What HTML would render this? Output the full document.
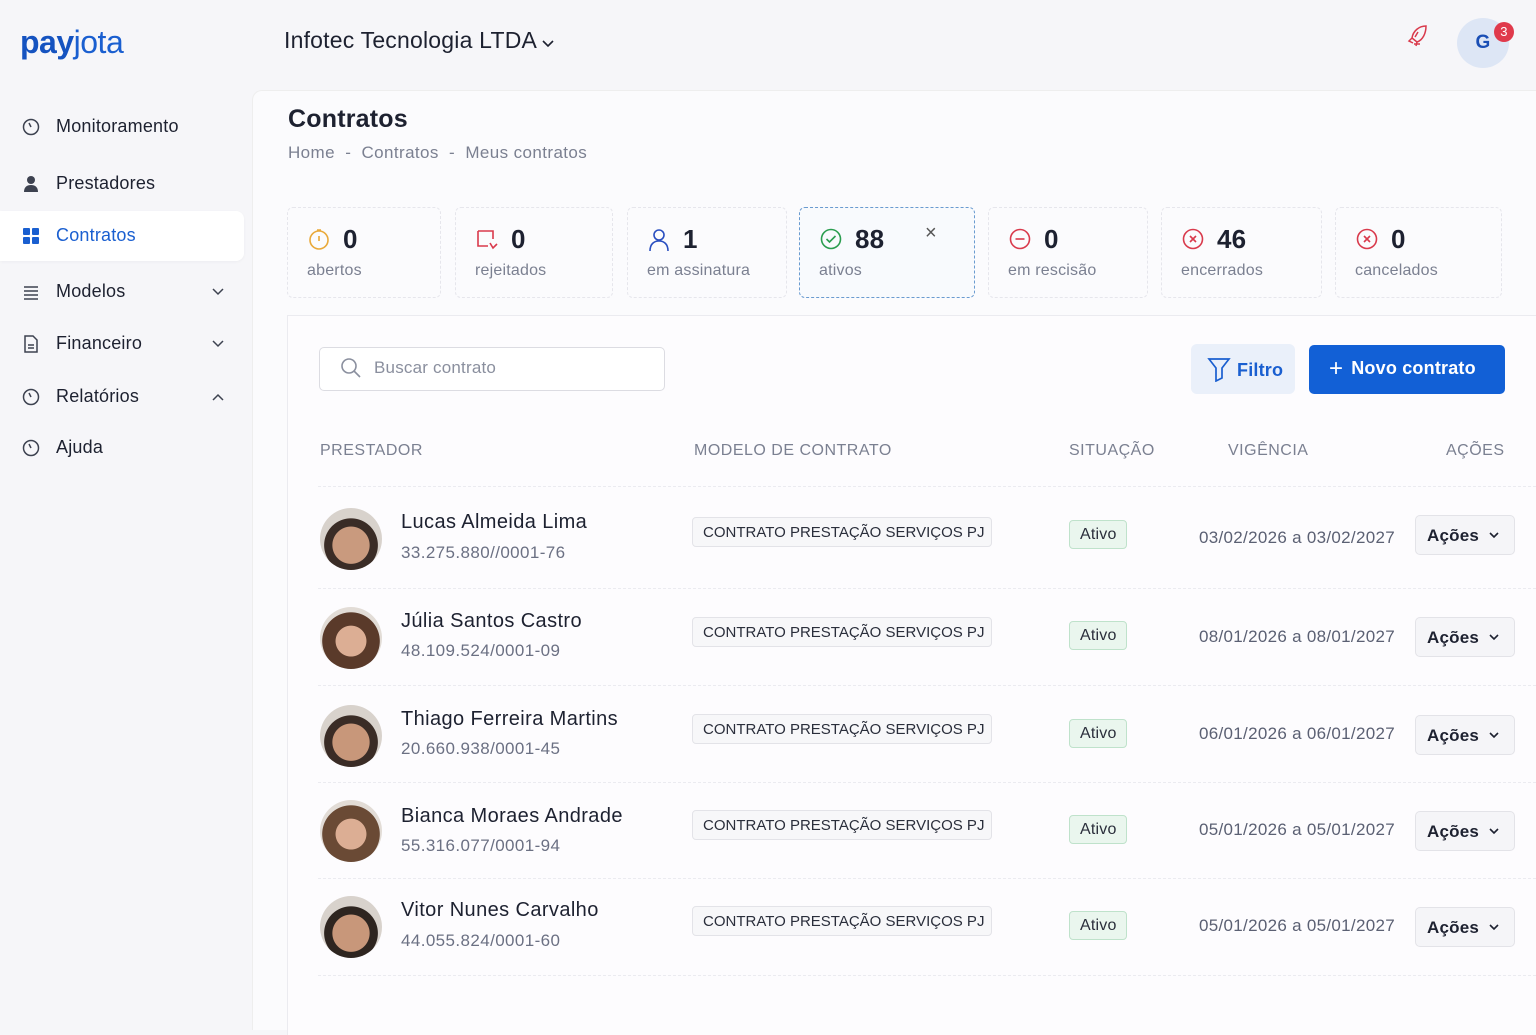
<!DOCTYPE html>
<html><head><meta charset="utf-8"><style>
*{box-sizing:border-box;margin:0;padding:0}
body{width:1536px;height:1024px;overflow:hidden;background:#f6f6f9;font-family:"Liberation Sans",sans-serif;color:#1d2130;position:relative;letter-spacing:.2px}
.abs{position:absolute}
.logo{left:20px;top:24px;font-size:32px;color:#1a5fd0;letter-spacing:-0.5px}
.logo b{font-weight:700;color:#1553c0}
.logo span{font-weight:300}
.company{left:284px;top:27px;font-size:23px;color:#1d2130}
.nav{left:22px;font-size:18px;color:#1d2130;display:flex;align-items:center}
.nav svg{margin-right:16px}
.active{left:0;top:211px;width:244px;height:50px;background:#fff;border-radius:0 8px 8px 0;box-shadow:0 1px 3px rgba(0,0,0,.04)}
.chev{position:absolute;left:190px}
.main{left:252px;top:90px;width:1290px;height:940px;background:#fbfbfd;border-radius:10px 0 0 0;border-left:1px solid #eee;border-top:1px solid #eee}
.card{top:207px;height:91px;background:#fbfbfd;border:1px dashed #e6e6ec;border-radius:6px}
.card .n{position:absolute;left:55px;top:16px;font-size:26px;font-weight:700;color:#1d2130}
.card .l{position:absolute;left:19px;top:54px;font-size:16px;color:#7b8091}
.card svg{position:absolute;left:20px;top:20px}
.panel{left:287px;top:315px;width:1260px;height:720px;background:#fdfcfe;border-top:1px solid #ebebf0;border-left:1px solid #ebebf0}
.th{top:442px;font-size:16px;color:#7b8091;letter-spacing:.5px}
.sep{left:318px;width:1218px;height:1px;border-top:1px dashed #ebebf0}
.name{left:401px;font-size:20px;color:#1d2130;letter-spacing:.4px}
.doc{left:401px;font-size:17px;color:#6b7083;letter-spacing:.4px}
.tag{left:692px;width:300px;height:30px;border:1px solid #e3e3e8;background:#f7f7f9;border-radius:4px;font-size:15px;color:#2a2e3b;padding:6px 0 0 10px;letter-spacing:0}
.st{left:1069px;width:58px;height:29px;border:1px solid #bfe2cb;background:#eaf6ee;border-radius:4px;font-size:16px;color:#2a2e3b;padding:5px 0 0 10px}
.dt{left:1199px;font-size:17px;color:#5b6073;letter-spacing:.3px}
.ac{left:1415px;width:100px;height:40px;border:1px solid #e3e3e8;background:#f5f5f8;border-radius:5px;font-size:17px;font-weight:700;color:#1d2130;padding:10px 0 0 11px}
.ac svg{position:absolute;right:15px;top:16px}
.av{left:320px;width:62px;height:62px;border-radius:50%;overflow:hidden}
</style></head><body>
<div class="abs logo"><b>pay</b><span>jota</span></div>
<div class="abs company">Infotec Tecnologia LTDA <svg width="12" height="8" viewBox="0 0 12 8"><path d="M1 1l5 5 5-5" stroke="#1d2130" stroke-width="1.6" fill="none"/></svg></div>
<svg class="abs" style="left:1406px;top:24px" width="24" height="28" viewBox="0 0 24 28"><path d="M20 2C13 2 7 7 6 14l5 4c6-2 9-9 9-16zM6 14l-3 3 4 2M11 18l-1 4M8 20h6M12 8l-3 5" stroke="#d93a4c" stroke-width="1.5" fill="none"/></svg>
<div class="abs" style="left:1457px;top:18px;width:52px;height:50px;border-radius:50%;background:#dde6f5;color:#1a4fb5;font-size:19px;font-weight:700;text-align:center;line-height:50px">G</div>
<div class="abs" style="left:1494px;top:22px;width:20px;height:20px;border-radius:50%;background:#e03a4c;color:#fff;font-size:13px;text-align:center;line-height:20px">3</div>

<div class="abs active"></div>
<div class="abs nav" style="top:116px"><svg width="18" height="18" viewBox="0 0 18 18"><circle cx="9" cy="9" r="7.5" stroke="#3d4250" stroke-width="1.5" fill="none"/><path d="M7 5l2 4" stroke="#3d4250" stroke-width="1.5"/></svg>Monitoramento</div>
<div class="abs nav" style="top:173px"><svg width="18" height="18" viewBox="0 0 18 18"><circle cx="9" cy="5" r="4" fill="#3d4250"/><path d="M2 17c0-5 3-7 7-7s7 2 7 7z" fill="#3d4250"/></svg>Prestadores</div>
<div class="abs nav" style="top:225px;color:#1a5fd0"><svg width="18" height="18" viewBox="0 0 18 18" fill="#1a5fd0"><rect x="1" y="1" width="7" height="7" rx="1"/><rect x="10" y="1" width="7" height="7" rx="1"/><rect x="1" y="10" width="7" height="7" rx="1"/><rect x="10" y="10" width="7" height="7" rx="1"/></svg>Contratos</div>
<div class="abs nav" style="top:281px;width:230px"><svg width="18" height="18" viewBox="0 0 18 18" stroke="#3d4250" stroke-width="1.5"><path d="M2 4h14M2 8h14M2 12h14M2 16h14"/></svg>Modelos<svg class="chev" width="12" height="8" viewBox="0 0 12 8"><path d="M1 1l5 5 5-5" stroke="#3d4250" stroke-width="1.5" fill="none"/></svg></div>
<div class="abs nav" style="top:333px;width:230px"><svg width="18" height="18" viewBox="0 0 18 18" stroke="#3d4250" stroke-width="1.5" fill="none"><path d="M3 1h8l4 4v12H3zM6 10h6M6 13h6"/></svg>Financeiro<svg class="chev" width="12" height="8" viewBox="0 0 12 8"><path d="M1 1l5 5 5-5" stroke="#3d4250" stroke-width="1.5" fill="none"/></svg></div>
<div class="abs nav" style="top:386px;width:230px"><svg width="18" height="18" viewBox="0 0 18 18"><circle cx="9" cy="9" r="7.5" stroke="#3d4250" stroke-width="1.5" fill="none"/><path d="M7 5l2 4" stroke="#3d4250" stroke-width="1.5"/></svg>Relatórios<svg class="chev" width="12" height="8" viewBox="0 0 12 8"><path d="M1 7l5-5 5 5" stroke="#3d4250" stroke-width="1.5" fill="none"/></svg></div>
<div class="abs nav" style="top:437px"><svg width="18" height="18" viewBox="0 0 18 18"><circle cx="9" cy="9" r="7.5" stroke="#3d4250" stroke-width="1.5" fill="none"/><path d="M7 5l2 4" stroke="#3d4250" stroke-width="1.5"/></svg>Ajuda</div>

<div class="abs main"></div>
<div class="abs" style="left:288px;top:105px;font-size:25px;font-weight:700;color:#1d2130">Contratos</div>
<div class="abs" style="left:288px;top:143px;font-size:17px;color:#7b8091;letter-spacing:.4px">Home &nbsp;-&nbsp; Contratos &nbsp;-&nbsp; Meus contratos</div>

<div class="abs card" style="left:287px;width:154px"><svg width="22" height="22" viewBox="0 0 22 22"><circle cx="11" cy="12" r="9" stroke="#e9a93a" stroke-width="1.6" fill="none"/><path d="M11 8v5M9 2h4" stroke="#e9a93a" stroke-width="1.6"/></svg><div class="n">0</div><div class="l">abertos</div></div>
<div class="abs card" style="left:455px;width:158px"><svg width="24" height="24" viewBox="0 0 24 24" stroke="#d93a4c" stroke-width="1.6" fill="none"><path d="M2 3h15v8M2 3v15h10M14 15l3 5 4-4"/></svg><div class="n">0</div><div class="l">rejeitados</div></div>
<div class="abs card" style="left:627px;width:160px"><svg width="22" height="24" viewBox="0 0 22 24" stroke="#2a4fc0" stroke-width="1.6" fill="none"><circle cx="11" cy="7" r="5"/><path d="M2 23c0-7 4-10 9-10s9 3 9 10"/></svg><div class="n">1</div><div class="l">em assinatura</div></div>
<div class="abs card" style="left:799px;width:176px;border-color:#6a9bd0;background:#f8fafd"><svg width="22" height="22" viewBox="0 0 22 22" stroke="#2a9d4f" stroke-width="1.6" fill="none"><circle cx="11" cy="11" r="9.5"/><path d="M6.5 11l3 3 6-6"/></svg><div class="n">88</div><div class="l">ativos</div><div style="position:absolute;left:125px;top:14px;font-size:20px;color:#555">×</div></div>
<div class="abs card" style="left:988px;width:160px"><svg width="22" height="22" viewBox="0 0 22 22" stroke="#d93a4c" stroke-width="1.6" fill="none"><circle cx="11" cy="11" r="9.5"/><path d="M6.5 11h9"/></svg><div class="n">0</div><div class="l">em rescisão</div></div>
<div class="abs card" style="left:1161px;width:161px"><svg width="22" height="22" viewBox="0 0 22 22" stroke="#d93a4c" stroke-width="1.6" fill="none"><circle cx="11" cy="11" r="9.5"/><path d="M8 8l6 6M14 8l-6 6"/></svg><div class="n">46</div><div class="l">encerrados</div></div>
<div class="abs card" style="left:1335px;width:167px"><svg width="22" height="22" viewBox="0 0 22 22" stroke="#d93a4c" stroke-width="1.6" fill="none"><circle cx="11" cy="11" r="9.5"/><path d="M8 8l6 6M14 8l-6 6"/></svg><div class="n">0</div><div class="l">cancelados</div></div>

<div class="abs panel"></div>
<div class="abs" style="left:319px;top:347px;width:346px;height:44px;border:1px solid #dcdce2;border-radius:5px;background:#fff"></div>
<svg class="abs" style="left:340px;top:357px" width="22" height="22" viewBox="0 0 22 22" stroke="#8a8f9e" stroke-width="1.6" fill="none"><circle cx="9" cy="9" r="7"/><path d="M14 14l6 6"/></svg>
<div class="abs" style="left:374px;top:358px;font-size:17px;color:#8a8f9e">Buscar contrato</div>
<div class="abs" style="left:1191px;top:344px;width:104px;height:50px;background:#eaf0fa;border-radius:6px"></div>
<svg class="abs" style="left:1207px;top:356px" width="24" height="26" viewBox="0 0 24 26" stroke="#1a5fd0" stroke-width="1.7" fill="none"><path d="M2 3h20l-7 9v10l-6 3V12z"/></svg>
<div class="abs" style="left:1237px;top:360px;font-size:18px;font-weight:700;color:#1a5fd0">Filtro</div>
<div class="abs" style="left:1309px;top:345px;width:196px;height:49px;background:#1260d6;border-radius:5px;color:#fff;font-size:18px;font-weight:700;padding:13px 0 0 20px"><span style="font-size:24px;line-height:18px;vertical-align:-2px;margin-right:8px;font-weight:400">+</span>Novo contrato</div>

<div class="abs th" style="left:320px">PRESTADOR</div>
<div class="abs th" style="left:694px">MODELO DE CONTRATO</div>
<div class="abs th" style="left:1069px">SITUAÇÃO</div>
<div class="abs th" style="left:1228px">VIGÊNCIA</div>
<div class="abs th" style="left:1446px">AÇÕES</div>

<div class="abs sep" style="top:486px"></div>
<div class="abs sep" style="top:588px"></div>
<div class="abs sep" style="top:685px"></div>
<div class="abs sep" style="top:782px"></div>
<div class="abs sep" style="top:878px"></div>
<div class="abs sep" style="top:975px"></div>

<div class="abs av" style="top:508px;background:radial-gradient(circle at 50% 60%,#c99a7e 0 38%,#3a2c26 39% 55%,#d8d2cc 56%)"></div>
<div class="abs name" style="top:511px">Lucas Almeida Lima</div><div class="abs doc" style="top:543px">33.275.880//0001-76</div>
<div class="abs tag" style="top:517px">CONTRATO PRESTAÇÃO SERVIÇOS PJ</div>
<div class="abs st" style="top:520px">Ativo</div>
<div class="abs dt" style="top:528px">03/02/2026 a 03/02/2027</div>
<div class="abs ac" style="top:515px">Ações<svg width="10" height="7" viewBox="0 0 10 7"><path d="M1 1l4 4 4-4" stroke="#1d2130" stroke-width="1.6" fill="none"/></svg></div>

<div class="abs av" style="top:607px;background:radial-gradient(circle at 50% 55%,#dcae94 0 33%,#5a3a2a 34% 62%,#e2dcd6 63%)"></div>
<div class="abs name" style="top:610px">Júlia Santos Castro</div><div class="abs doc" style="top:641px">48.109.524/0001-09</div>
<div class="abs tag" style="top:617px">CONTRATO PRESTAÇÃO SERVIÇOS PJ</div>
<div class="abs st" style="top:621px">Ativo</div>
<div class="abs dt" style="top:627px">08/01/2026 a 08/01/2027</div>
<div class="abs ac" style="top:617px">Ações<svg width="10" height="7" viewBox="0 0 10 7"><path d="M1 1l4 4 4-4" stroke="#1d2130" stroke-width="1.6" fill="none"/></svg></div>

<div class="abs av" style="top:705px;background:radial-gradient(circle at 50% 60%,#c8977a 0 38%,#3a2c26 39% 55%,#d8d2cc 56%)"></div>
<div class="abs name" style="top:708px">Thiago Ferreira Martins</div><div class="abs doc" style="top:739px">20.660.938/0001-45</div>
<div class="abs tag" style="top:714px">CONTRATO PRESTAÇÃO SERVIÇOS PJ</div>
<div class="abs st" style="top:719px">Ativo</div>
<div class="abs dt" style="top:724px">06/01/2026 a 06/01/2027</div>
<div class="abs ac" style="top:715px">Ações<svg width="10" height="7" viewBox="0 0 10 7"><path d="M1 1l4 4 4-4" stroke="#1d2130" stroke-width="1.6" fill="none"/></svg></div>

<div class="abs av" style="top:800px;background:radial-gradient(circle at 50% 55%,#dcae94 0 33%,#6a4a35 34% 62%,#e2dcd6 63%)"></div>
<div class="abs name" style="top:805px">Bianca Moraes Andrade</div><div class="abs doc" style="top:836px">55.316.077/0001-94</div>
<div class="abs tag" style="top:810px">CONTRATO PRESTAÇÃO SERVIÇOS PJ</div>
<div class="abs st" style="top:815px">Ativo</div>
<div class="abs dt" style="top:820px">05/01/2026 a 05/01/2027</div>
<div class="abs ac" style="top:811px">Ações<svg width="10" height="7" viewBox="0 0 10 7"><path d="M1 1l4 4 4-4" stroke="#1d2130" stroke-width="1.6" fill="none"/></svg></div>

<div class="abs av" style="top:896px;background:radial-gradient(circle at 50% 60%,#c8977a 0 38%,#2e2520 39% 55%,#d8d2cc 56%)"></div>
<div class="abs name" style="top:899px">Vitor Nunes Carvalho</div><div class="abs doc" style="top:931px">44.055.824/0001-60</div>
<div class="abs tag" style="top:906px">CONTRATO PRESTAÇÃO SERVIÇOS PJ</div>
<div class="abs st" style="top:911px">Ativo</div>
<div class="abs dt" style="top:916px">05/01/2026 a 05/01/2027</div>
<div class="abs ac" style="top:907px">Ações<svg width="10" height="7" viewBox="0 0 10 7"><path d="M1 1l4 4 4-4" stroke="#1d2130" stroke-width="1.6" fill="none"/></svg></div>
</body></html>
